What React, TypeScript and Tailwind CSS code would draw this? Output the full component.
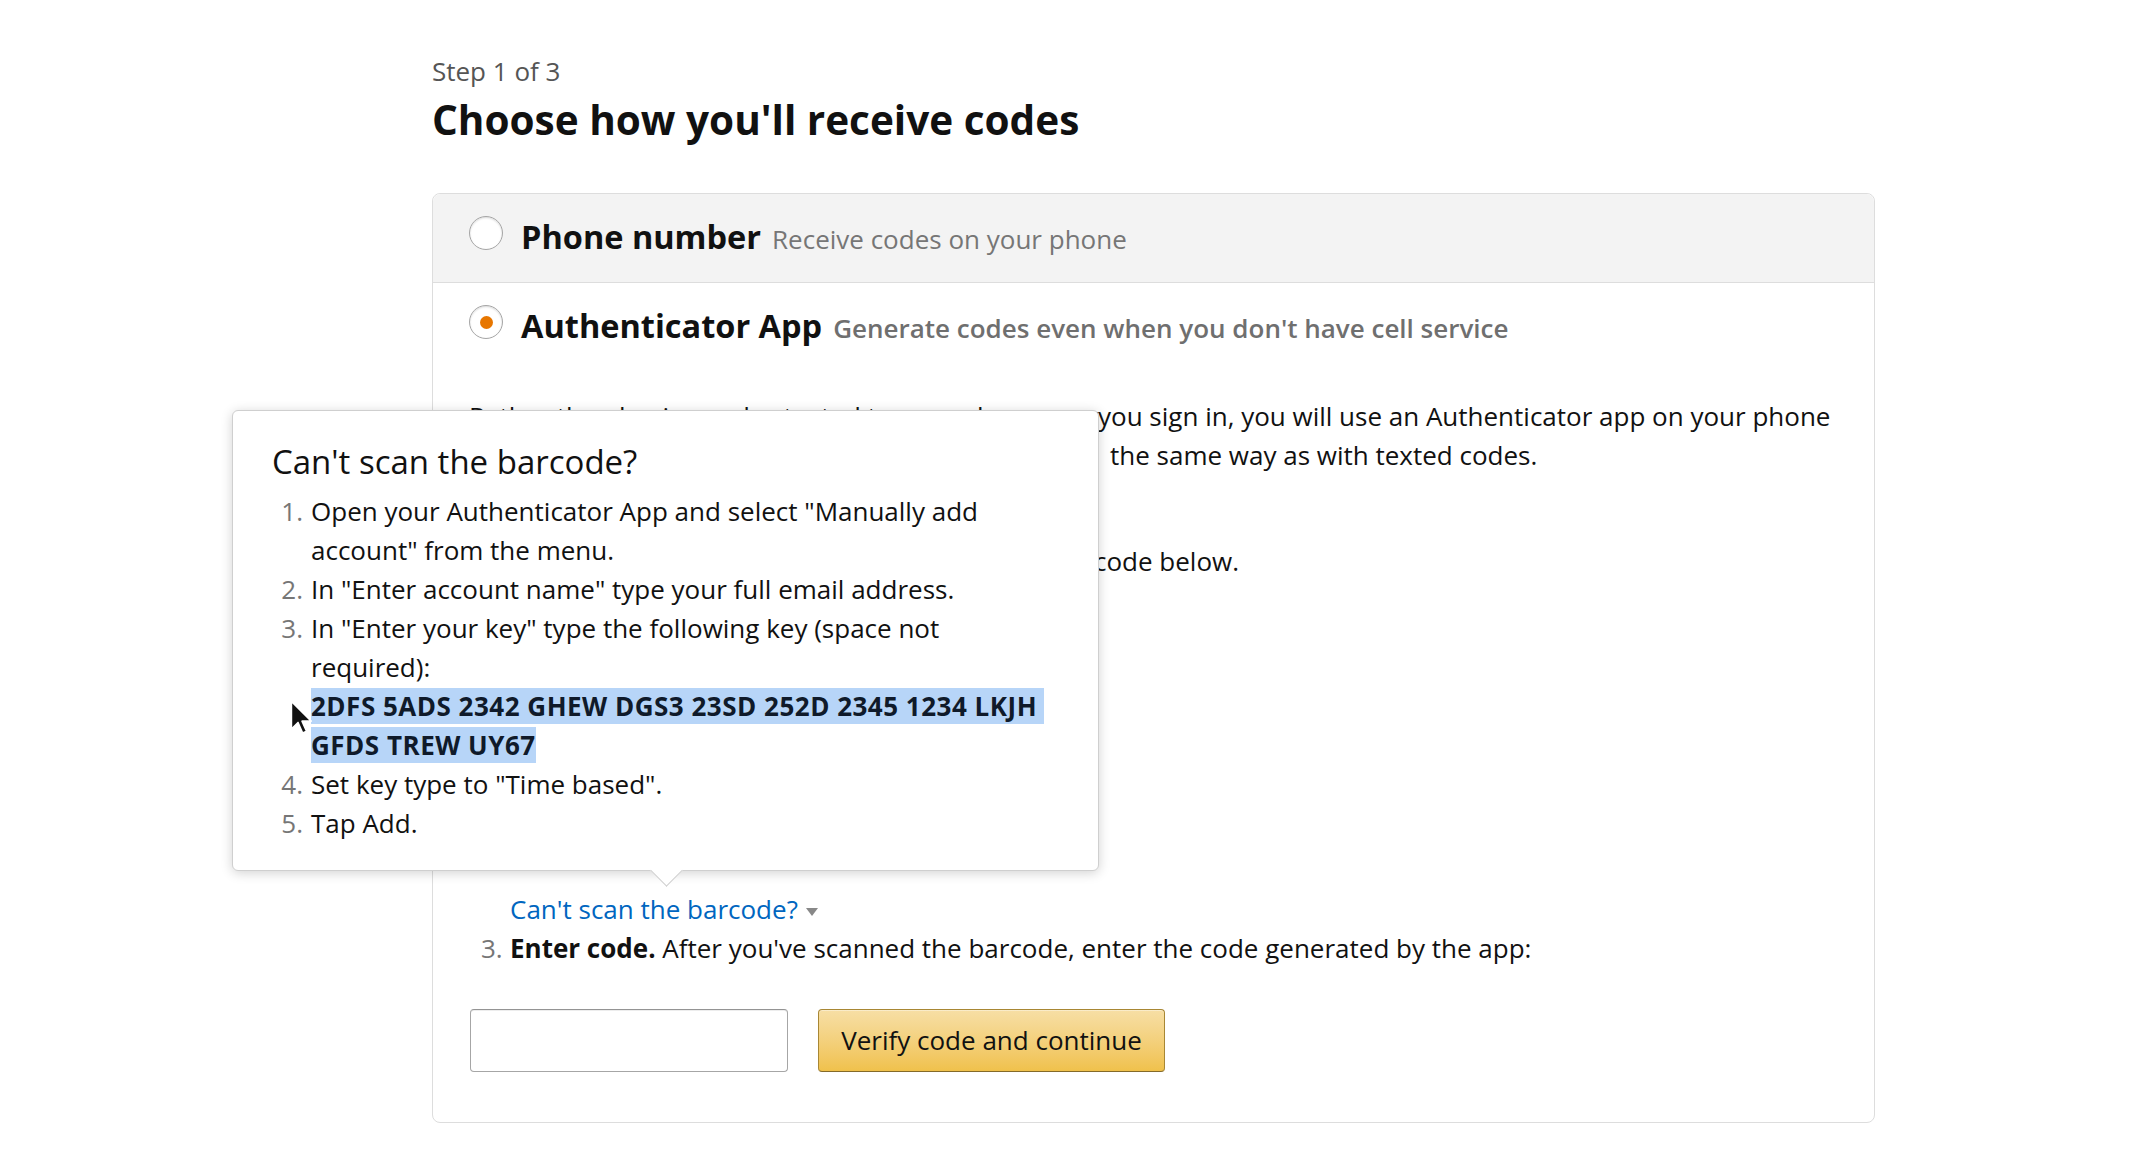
import React from 'react';

const Radio: React.FC<{ checked?: boolean }> = ({ checked }) => (
  <span className="mb-[10px] flex h-[34px] w-[34px] shrink-0 items-center justify-center rounded-full border border-[#a6a6a6] bg-white shadow-[inset_0_1px_2px_rgba(0,0,0,0.15)]">
    {checked && <span className="h-[13px] w-[13px] rounded-full bg-[#e77600]" />}
  </span>
);

const Option: React.FC<{ title: string; hint: string; checked?: boolean; shaded?: boolean }> = ({
  title,
  hint,
  checked,
  shaded,
}) => (
  <div
    className={
      shaded
        ? 'flex items-center rounded-t-[8px] border-b border-[#ddd] bg-[#f3f3f3] py-[22px] pl-[36px]'
        : 'flex items-center py-[22px] pl-[36px]'
    }
  >
    <Radio checked={checked} />
    <div className="ml-[18px] flex items-baseline">
      <span className="text-[32.5px] font-bold leading-[42px] text-[#111]">{title}</span>
      <span
        className={
          checked
            ? 'ml-[11px] text-[26px] font-semibold leading-[42px] text-[#6f6f6f]'
            : 'ml-[11px] text-[26px] leading-[42px] text-[#767676]'
        }
      >
        {hint}
      </span>
    </div>
  </div>
);

const Popover: React.FC = () => {
  const Item: React.FC<{ n: number; children: React.ReactNode }> = ({ n, children }) => (
    <li className="flex gap-[8px]">
      <span className="w-[31px] shrink-0 text-right text-[#767676]">{n}.</span>
      <div>{children}</div>
    </li>
  );

  return (
    <div className="absolute left-[232px] top-[410px] h-[461px] w-[867px] rounded-[6px] border border-[#cfcfcf] bg-white pl-[39px] pt-[31px] shadow-[0_2px_12px_rgba(0,0,0,0.18)]">
      <h2 className="text-[33px] leading-[40px] text-[#111]">Can't scan the barcode?</h2>
      <ol className="mt-[10px] text-[26px] leading-[39px] text-[#111]">
        <Item n={1}>
          Open your Authenticator App and select "Manually add
          <br />
          account" from the menu.
        </Item>
        <Item n={2}>In "Enter account name" type your full email address.</Item>
        <Item n={3}>
          In "Enter your key" type the following key (space not
          <br />
          required):
          <div>
            <span className="box-decoration-clone bg-[#b7d5f8] font-bold tracking-[0.5px] text-[#0f1a2a]">
              2DFS 5ADS 2342 GHEW DGS3 23SD 252D 2345 1234 LKJH&nbsp;
              <br />
              GFDS TREW UY67
            </span>
          </div>
        </Item>
        <Item n={4}>Set key type to "Time based".</Item>
        <Item n={5}>Tap Add.</Item>
      </ol>
      <div className="absolute -bottom-[12px] left-[422px] h-[23px] w-[23px] rotate-45 border-b border-r border-[#cfcfcf] bg-white" />
    </div>
  );
};

const Cursor: React.FC = () => (
  <svg className="absolute left-[290px] top-[700px]" width="24" height="37" viewBox="0 0 18 28">
    <path d="M1 1 L1 22 L6 17 L9.5 25 L12.5 23.7 L9 16 L16 16 Z" fill="#111" stroke="#fff" strokeWidth="1.2" strokeLinejoin="round" />
  </svg>
);

export default function App() {
  return (
    <div className="relative min-h-[1166px] w-full bg-white font-['Open_Sans',sans-serif] text-[#111]">
      <div className="ml-[432px] w-[1443px] pt-[56px]">
        <div className="text-[26px] leading-[30px] text-[#555]">Step 1 of 3</div>
        <h1 className="mt-[10px] text-[40.5px] font-bold leading-[48px] text-[#111]">Choose how you'll receive codes</h1>

        <div className="mt-[49px] rounded-[8px] border border-[#ddd]">
          <Option shaded title="Phone number" hint="Receive codes on your phone" />
          <Option checked title="Authenticator App" hint="Generate codes even when you don't have cell service" />

          <div className="pb-[50px] pl-[36px] pr-[36px] pt-[26px] text-[26px] leading-[39px]">
            <p>
              <span className="inline-block w-[629px] overflow-hidden whitespace-nowrap align-top">
                Rather than having codes texted to your phone every time
              </span>
              you sign in, you will use an Authenticator app on your phone
              <br />
              <span className="inline-block w-[641px] overflow-hidden whitespace-nowrap align-top">
                to generate codes. Enter them in
              </span>
              the same way as with texted codes.
            </p>

            <div className="ml-[12px] mt-[28px]">
              <div className="flex">
                <span className="w-[29px] shrink-0 text-[#767676]">1.</span>
                <span>
                  <b>Install an app.</b> Download an Authenticator app.
                </span>
              </div>
              <div className="flex">
                <span className="w-[29px] shrink-0 text-[#767676]">2.</span>
                <span>
                  <span className="inline-block w-[584px] overflow-hidden whitespace-nowrap align-top">
                    <b>Scan barcode.</b> Open the app and scan the bar
                  </span>
                  code below.
                </span>
              </div>
              <div className="h-[309px] pl-[29px]" />
              <div className="pl-[29px]">
                <span className="text-[#0066c0]">Can't scan the barcode?</span>
                <span className="ml-[8px] inline-block border-x-[6px] border-t-[8px] border-x-transparent border-t-[#888] align-middle" />
              </div>
              <div className="flex">
                <span className="w-[29px] shrink-0 text-[#767676]">3.</span>
                <span>
                  <b>Enter code.</b> After you've scanned the barcode, enter the code generated by the app:
                </span>
              </div>
            </div>

            <div className="mt-[41px] flex gap-[30px]">
              <input
                type="text"
                className="ml-[1px] h-[63px] w-[318px] rounded-[4px] border border-[#a6a6a6] border-t-[#949494] bg-white px-[10px] shadow-[inset_0_1px_0_rgba(0,0,0,0.07)] outline-none"
              />
              <button className="h-[63px] w-[347px] rounded-[4px] border border-[#a88734] border-b-[#846a29] bg-gradient-to-b from-[#f7dfa5] to-[#f0c14b] text-[26px] text-[#111] shadow-[inset_0_1px_0_rgba(255,255,255,0.4)]">
                Verify code and continue
              </button>
            </div>
          </div>
        </div>
      </div>

      <Popover />
      <Cursor />
    </div>
  );
}
